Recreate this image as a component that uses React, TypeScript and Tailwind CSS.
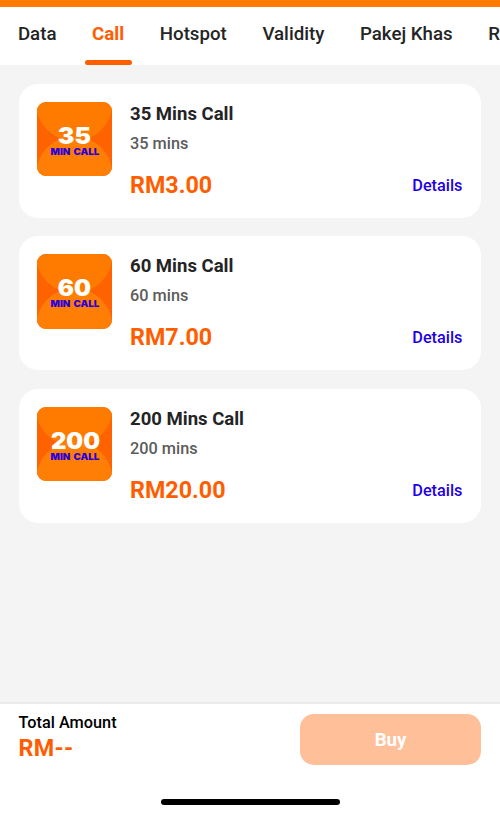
type Plan = {
  id: number;
  mins: number;
  price: string;
};

const plans: Plan[] = [
  { id: 1, mins: 35, price: "3.00" },
  { id: 2, mins: 60, price: "7.00" },
  { id: 3, mins: 200, price: "20.00" },
];

const tabs = ["Data", "Call", "Hotspot", "Validity", "Pakej Khas", "Roaming"];

function PlanBadge({ mins }: { mins: number }) {
  const wide = mins > 99;

  return (
    <div className="w-[74.5px] h-[74.5px] shrink-0 rounded-[9px] overflow-hidden bg-[#ff6200]">
      <svg viewBox="0 0 75 75" className="w-full h-full">
        <circle cx="37.5" cy="1" r="38.5" fill="#ff7b00" />
        <circle cx="37.5" cy="73" r="38.5" fill="#ff7e05" />
        <text
          x={wide ? 14 : 21}
          y="41.8"
          textLength={wide ? 49.5 : 33.5}
          lengthAdjust="spacingAndGlyphs"
          fontSize="22.5"
          fontWeight="900"
          fill="#fff"
          className="font-['Inter',sans-serif]"
        >
          {mins}
        </text>
        <text
          x="13.7"
          y="53"
          textLength="49"
          lengthAdjust="spacingAndGlyphs"
          fontSize="8.8"
          fontWeight="900"
          wordSpacing="1"
          fill="#2b00d9"
          className="font-['Inter',sans-serif]"
        >
          MIN CALL
        </text>
      </svg>
    </div>
  );
}

function PlanCard({ plan }: { plan: Plan }) {
  return (
    <div className="flex h-[134px] bg-white rounded-[19px] pt-[18px] px-[18.5px] gap-[18.5px]">
      <PlanBadge mins={plan.mins} />
      <div className="flex-1">
        <h3 className="text-[18.55px] leading-[24px] font-bold text-[#242424]">
          {plan.mins} Mins Call
        </h3>
        <p className="mt-[7px] text-[16.3px] leading-[22px] font-medium text-[#5c5c5c]">{plan.mins} mins</p>
        <div className="mt-[15px] flex items-center justify-between">
          <span className="text-[23.3px] leading-[30px] font-bold text-[#ff5e00]">RM{plan.price}</span>
          <button className="pt-[2px] text-[16.3px] leading-[22px] font-medium text-[#1f00e6]">Details</button>
        </div>
      </div>
    </div>
  );
}

export default function App() {
  return (
    <div className="w-[500px] h-[814px] flex flex-col overflow-hidden bg-[#f4f4f4] font-['Roboto',sans-serif]">
      <div className="h-[7px] shrink-0 bg-[#ff7b00]" />
      <nav className="flex h-[58px] shrink-0 bg-white pl-[10.4px] gap-[20.6px] overflow-hidden">
        {tabs.map((tab) => (
          <button
            key={tab}
            className={`flex flex-col shrink-0 px-[7.5px] text-[18.7px] leading-[24px] pt-[15px] whitespace-nowrap ${
              tab === "Call" ? "font-bold text-[#ff5e00]" : "font-medium text-[#242424]"
            }`}
          >
            {tab}
            {tab === "Call" && <span className="mt-auto -mx-[7.5px] self-stretch h-[5px] rounded-full bg-[#ff5e00]" />}
          </button>
        ))}
      </nav>

      <main className="flex-1 flex flex-col gap-[18.5px] pl-[18.5px] pr-[19px] pt-[18.9px]">
        {plans.map((plan) => (
          <PlanCard key={plan.id} plan={plan} />
        ))}
      </main>

      <footer className="h-[112px] shrink-0 flex flex-col bg-white border-t-2 border-[#ebebeb]">
        <div className="flex justify-between pl-[18.5px] pr-[18.7px] pt-[10px]">
          <div>
            <p className="text-[16.3px] leading-[18px] font-medium text-black">Total Amount</p>
            <p className="text-[23.4px] leading-[32px] font-bold tracking-[0.3px] text-[#ff5e00]">RM--</p>
          </div>
          <button className="w-[181.5px] h-[51px] rounded-[14px] bg-[#ffbf99] pt-[2px] text-[18.7px] font-bold text-white">
            Buy
          </button>
        </div>
        <div className="mt-auto mb-[9.5px] mx-auto w-[179px] h-[6px] rounded-full bg-black" />
      </footer>
    </div>
  );
}
